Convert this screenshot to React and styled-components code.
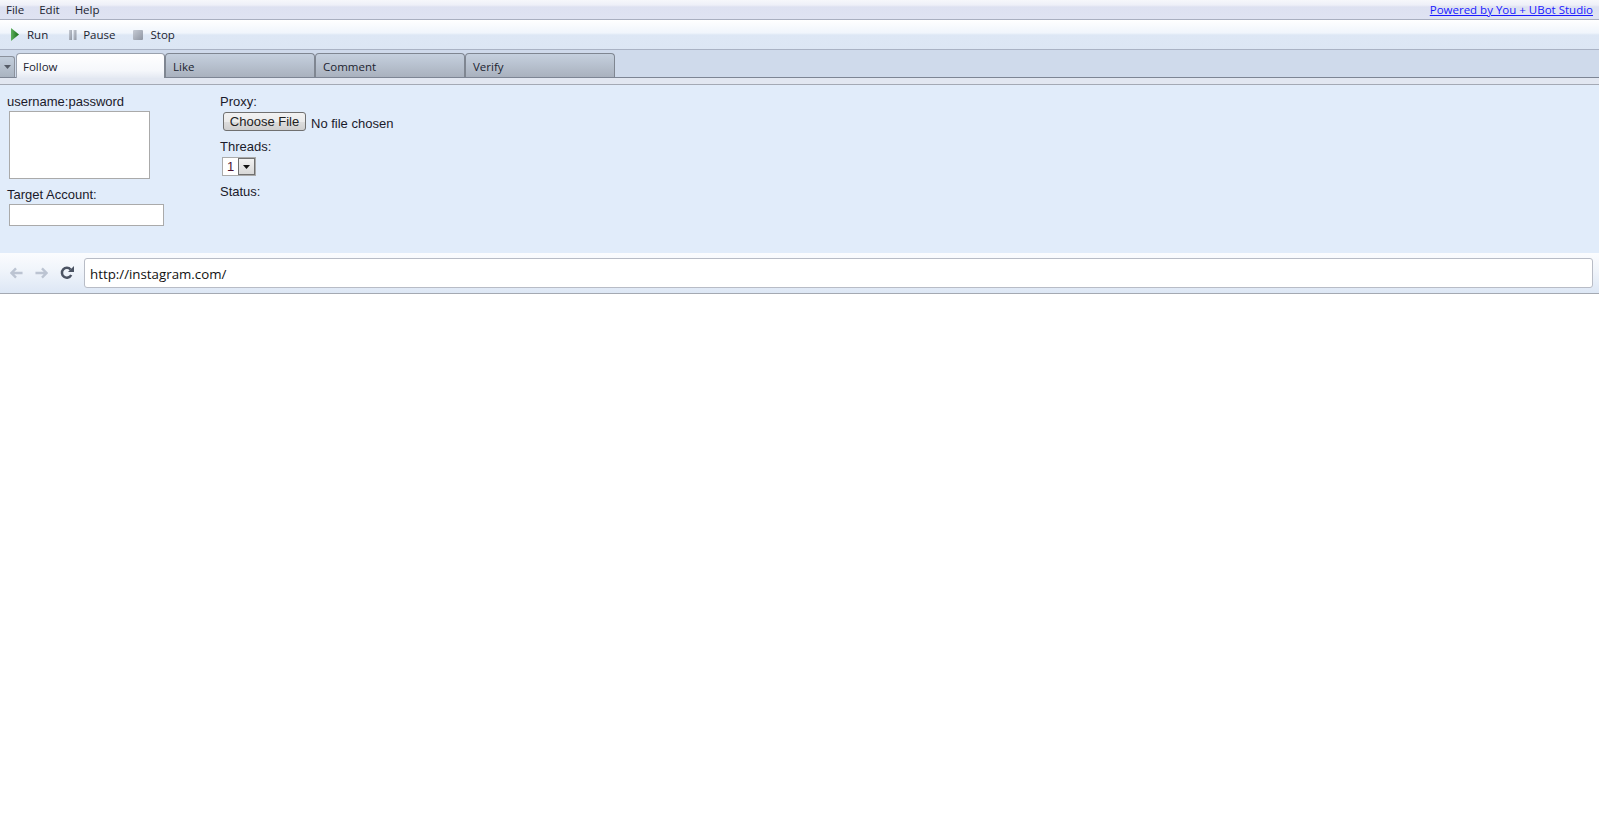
import React from "react";
import styled, { createGlobalStyle } from "styled-components";

const GlobalStyle = createGlobalStyle`
  html, body {
    margin: 0;
    padding: 0;
    background: #fff;
  }
`;

const uiFont = `"Open Sans", "Noto Sans", sans-serif`;
const formFont = `"Liberation Sans", Arial, sans-serif`;

const Page = styled.div`
  width: 1599px;
  height: 835px;
  overflow: hidden;
  background: #fff;
  font-family: ${uiFont};
`;

const MenuBar = styled.div`
  height: 19px;
  box-sizing: border-box;
  display: flex;
  align-items: center;
  justify-content: space-between;
  padding: 0 6px 1px;
  background: linear-gradient(#f6f7fb 0, #eef0f8 5px, #dde1f1 7px, #dfe3f2 100%);
  box-shadow: 0 1px 0 #a9afc0;
  margin-bottom: 1px;
`;

const MenuList = styled.div`
  display: flex;
  gap: 15px;
  font-size: 11.5px;
  color: #1c2430;
`;

const PoweredLink = styled.a`
  font-size: 11.5px;
  color: #1a1aff;
  text-decoration: underline;
`;

const ToolBar = styled.div`
  height: 29px;
  display: flex;
  align-items: center;
  padding-left: 11px;
  font-size: 11.5px;
  color: #1c2430;
  background: linear-gradient(#ffffff 0, #f0f5fc 13px, #dde7f5 15px, #dce6f4 100%);
  border-bottom: 1px solid #a9b2c4;
`;

const ToolButton = styled.div`
  display: flex;
  align-items: center;
  gap: ${(p) => p.$gap}px;
  margin-right: ${(p) => p.$after}px;
`;

const TabStrip = styled.div`
  height: 24px;
  padding-top: 3px;
  display: flex;
  align-items: stretch;
  background: #cfdaeb;
  border-bottom: 1px solid #7d8594;
`;

const TabMenu = styled.div`
  width: 14px;
  margin-top: 3px;
  display: flex;
  align-items: center;
  justify-content: center;
  background: linear-gradient(#c3cedc, #a9b3c0);
  border: 1px solid #8b919c;
  border-left: none;
  border-bottom: none;
  border-radius: 0 3px 0 0;
`;

const Tab = styled.div`
  width: ${(p) => (p.$active ? 149 : 150)}px;
  box-sizing: border-box;
  padding: 3px 0 0 ${(p) => (p.$active ? 6 : 7)}px;
  font-size: 11.5px;
  line-height: 19px;
  color: #1c2430;
  border: 1px solid #7f8691;
  border-bottom: none;
  border-radius: 4px 4px 0 0;
  margin-left: ${(p) => (p.$active ? 1 : 0)}px;
  background: ${(p) =>
    p.$active
      ? "linear-gradient(#ffffff, #f5f7fb 70%, #e4e9f2)"
      : "linear-gradient(#c5d0de, #a9b1be)"};
  ${(p) => p.$active && "margin-bottom: -1px; border-color: #9aa1ad; border-right-color: #7f8691;"}
`;

const TabFoot = styled.div`
  height: 6px;
  background: #e2e7f1;
  border-bottom: 1px solid #a4a9b4;
`;

const FormPanel = styled.div`
  height: 168px;
  box-sizing: border-box;
  background: #e1ecfa;
  display: flex;
  padding: 8px 0 0 7px;
  font-family: ${formFont};
  font-size: 13px;
  line-height: 16px;
  color: #1a1a2a;
`;

const LeftColumn = styled.div`
  width: 213px;
  display: flex;
  flex-direction: column;
`;

const RightColumn = styled.div`
  display: flex;
  flex-direction: column;
`;

const FieldLabel = styled.div`
  padding-top: ${(p) => (p.$low ? 1 : 0)}px;
  margin-bottom: ${(p) => (p.$low ? -1 : 0)}px;
`;

const AccountsBox = styled.div`
  width: 141px;
  height: 68px;
  box-sizing: border-box;
  margin: 2px 0 7px 2px;
  background: #fff;
  border: 1px solid #aaaaaa;
`;

const TargetBox = styled.div`
  width: 155px;
  height: 22px;
  box-sizing: border-box;
  margin: 2px 0 0 2px;
  background: #fff;
  border: 1px solid #aaaaaa;
`;

const FileRow = styled.div`
  height: 19px;
  display: flex;
  align-items: center;
  margin: 3px 0 8px 3px;
`;

const FileButton = styled.div`
  width: 83px;
  height: 19px;
  box-sizing: border-box;
  display: flex;
  align-items: center;
  justify-content: center;
  border: 1px solid #707070;
  border-radius: 3px;
  background: linear-gradient(#f2f2f2, #ebebeb 50%, #dddddd 52%, #cfcfcf);
  margin-right: 5px;
  color: #222;
`;

const FileName = styled.span`
  padding-top: 4px;
`;

const ThreadSelect = styled.div`
  width: 34px;
  height: 19px;
  box-sizing: border-box;
  margin: 2px 0 8px 2px;
  display: flex;
  background: #fff;
  border: 1px solid #aaaaaa;
`;

const ThreadValue = styled.div`
  width: 15px;
  text-align: center;
  line-height: 17px;
  color: #4b1030;
`;

const ThreadArrow = styled.div`
  flex: 1;
  display: flex;
  align-items: center;
  justify-content: center;
  background: linear-gradient(#f2f2f2, #d8d8d8);
  border: 1px solid #707070;
`;

const NavBar = styled.div`
  height: 41px;
  box-sizing: border-box;
  display: flex;
  align-items: center;
  padding-left: 10px;
  background: linear-gradient(#fbfcfe 0, #f1f5fb 40%, #dde7f5 100%);
  border-bottom: 1px solid #a4a9b2;
`;

const NavIcons = styled.div`
  display: flex;
  align-items: center;
  gap: 12px;
  width: 74px;
`;

const UrlBar = styled.div`
  width: 1509px;
  height: 30px;
  box-sizing: border-box;
  display: flex;
  align-items: center;
  padding: 2px 0 0 5px;
  background: #fff;
  border: 1px solid #b8bcc6;
  border-radius: 3px;
  font-size: 13.3px;
  color: #111;
`;

const PlayIcon = () => (
  <svg width="8" height="13" viewBox="0 0 8 13">
    <defs>
      <linearGradient id="play" x1="0" x2="1" y1="0" y2="0">
        <stop offset="0" stopColor="#5fb05f" />
        <stop offset="1" stopColor="#156b15" />
      </linearGradient>
    </defs>
    <path d="M0 0 L8 6.5 L0 13 Z" fill="url(#play)" />
  </svg>
);

const PauseIcon = () => (
  <svg width="8" height="10" viewBox="0 0 8 10">
    <defs>
      <linearGradient id="grey" x1="0" x2="1" y1="0" y2="1">
        <stop offset="0" stopColor="#c6cbd4" />
        <stop offset="1" stopColor="#8e95a2" />
      </linearGradient>
    </defs>
    <rect x="0" y="0" width="3" height="10" fill="url(#grey)" />
    <rect x="4.5" y="0" width="3" height="10" fill="url(#grey)" />
  </svg>
);

const StopIcon = () => (
  <svg width="10" height="10" viewBox="0 0 10 10">
    <rect width="10" height="10" rx="1" fill="url(#grey)" />
  </svg>
);

const ArrowDown = ({ color }) => (
  <svg width="7" height="4" viewBox="0 0 7 4">
    <path d="M0 0 H7 L3.5 4 Z" fill={color} />
  </svg>
);

const BackIcon = ({ flip }) => (
  <svg
    width="13"
    height="12"
    viewBox="0 0 14 12"
    style={flip ? { transform: "scaleX(-1)" } : undefined}
  >
    <path
      d="M6.5 1 L1.5 6 L6.5 11 M2 6 H13.5"
      fill="none"
      stroke="#bcc4d2"
      strokeWidth="2.6"
    />
  </svg>
);

const ReloadIcon = () => (
  <svg width="14" height="14" viewBox="0 0 14 14">
    <path
      d="M11.2 9 A4.9 4.9 0 1 1 10.6 3.6"
      fill="none"
      stroke="#4b5363"
      strokeWidth="2.5"
    />
    <path d="M8 6 H14 V0 Z" fill="#4b5363" />
  </svg>
);

const App = () => {
  return (
    <Page>
      <GlobalStyle />
      <MenuBar>
        <MenuList>
          <span>File</span>
          <span>Edit</span>
          <span>Help</span>
        </MenuList>
        <PoweredLink href="#">Powered by You + UBot Studio</PoweredLink>
      </MenuBar>
      <ToolBar>
        <ToolButton $gap={8} $after={21}>
          <PlayIcon />
          <span>Run</span>
        </ToolButton>
        <ToolButton $gap={6} $after={17}>
          <PauseIcon />
          <span>Pause</span>
        </ToolButton>
        <ToolButton $gap={8}>
          <StopIcon />
          <span>Stop</span>
        </ToolButton>
      </ToolBar>
      <TabStrip>
        <TabMenu>
          <ArrowDown color="#555b66" />
        </TabMenu>
        <Tab $active>Follow</Tab>
        <Tab>Like</Tab>
        <Tab>Comment</Tab>
        <Tab>Verify</Tab>
      </TabStrip>
      <TabFoot />
      <FormPanel>
        <LeftColumn>
          <FieldLabel $low>username:password</FieldLabel>
          <AccountsBox />
          <FieldLabel $low>Target Account:</FieldLabel>
          <TargetBox />
        </LeftColumn>
        <RightColumn>
          <FieldLabel $low>Proxy:</FieldLabel>
          <FileRow>
            <FileButton>Choose File</FileButton>
            <FileName>No file chosen</FileName>
          </FileRow>
          <FieldLabel>Threads:</FieldLabel>
          <ThreadSelect>
            <ThreadValue>1</ThreadValue>
            <ThreadArrow>
              <ArrowDown color="#111" />
            </ThreadArrow>
          </ThreadSelect>
          <FieldLabel>Status:</FieldLabel>
        </RightColumn>
      </FormPanel>
      <NavBar>
        <NavIcons>
          <BackIcon />
          <BackIcon flip />
          <ReloadIcon />
        </NavIcons>
        <UrlBar>http://instagram.com/</UrlBar>
      </NavBar>
    </Page>
  );
};

export default App;
